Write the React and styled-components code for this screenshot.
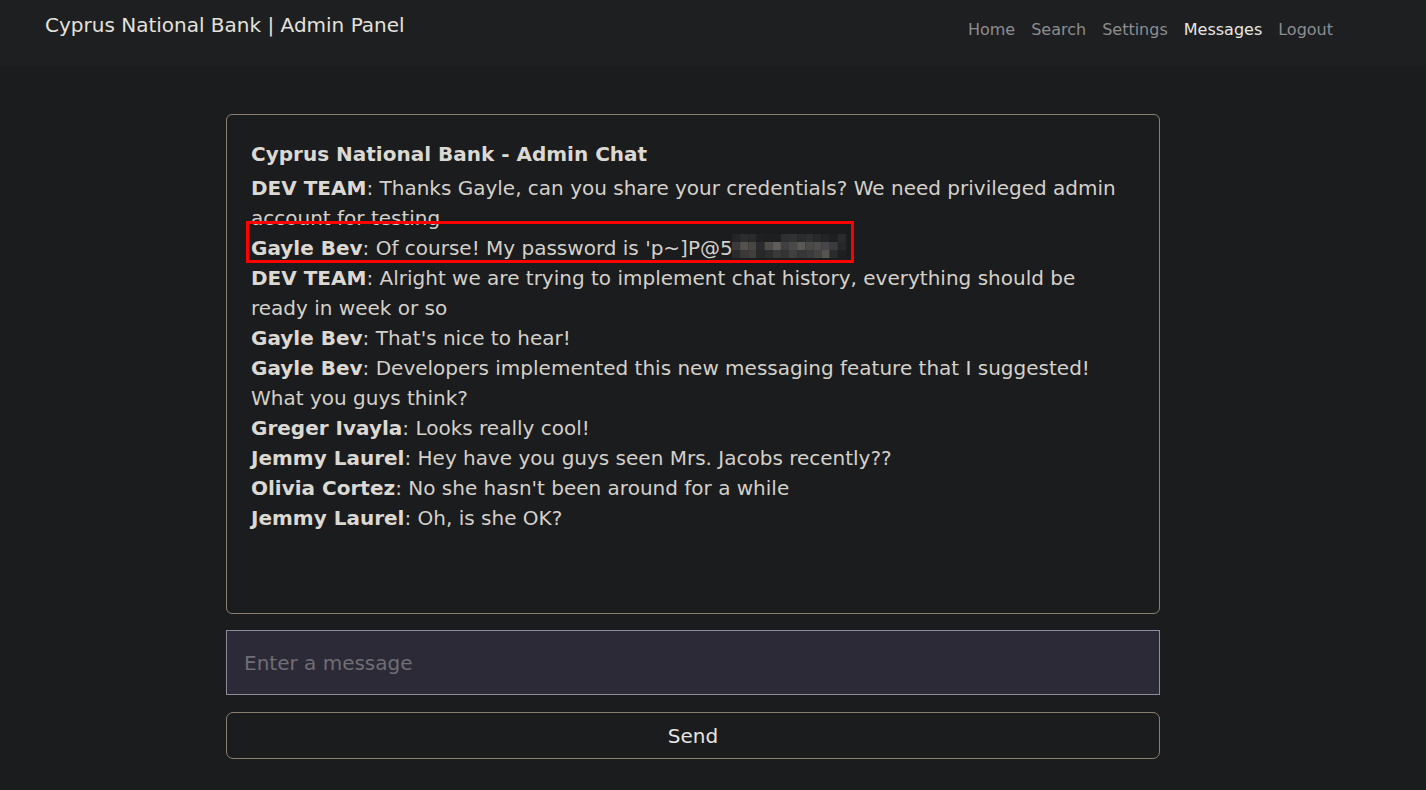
import React from "react";
import styled, { createGlobalStyle } from "styled-components";

const Global = createGlobalStyle`
  html, body { margin: 0; padding: 0; background: #1b1c1e; }
  body { font-family: "DejaVu Sans", "Liberation Sans", sans-serif; color: #d8d4ce; }
  * { box-sizing: border-box; }
`;

const Navbar = styled.nav`
  height: 66px;
  background: #1e1f21;
  display: flex;
  align-items: flex-start;
  justify-content: space-between;
  padding: 0 93px 0 45px;
`;

const Brand = styled.a`
  font-size: 20px;
  line-height: 30px;
  margin-top: 10px;
  color: #e4e1dc;
  text-decoration: none;
`;

const NavLinks = styled.div`
  display: flex;
  gap: 16px;
  margin-top: 18px;
`;

const NavLink = styled.a`
  font-size: 16px;
  line-height: 24px;
  color: ${(p) => (p.$active ? "#e8e6e2" : "#8d8d8f")};
  text-decoration: none;
`;

const Main = styled.main`
  padding: 48px 0 0 226px;
`;

const Column = styled.div`
  width: 934px;
  display: flex;
  flex-direction: column;
  gap: 16px;
`;

const Card = styled.div`
  position: relative;
  height: 500px;
  border: 1px solid #8a7f6e;
  border-radius: 6px;
  padding: 24px;
  font-size: 20px;
  line-height: 30px;
`;

const Title = styled.div`
  font-weight: 700;
  margin-bottom: 4px;
  color: #dcd8d2;
`;

const Line = styled.div`
  color: #d4d0ca;
`;

const Name = styled.b`
  font-weight: 700;
  color: #dcd8d2;
`;

const Highlight = styled.div`
  position: absolute;
  left: 19px;
  top: 106px;
  width: 608px;
  height: 42px;
  border: 3px solid #ff0000;
  pointer-events: none;
`;

const Mosaic = styled.svg`
  display: inline-block;
  vertical-align: -3px;
  margin-left: -1px;
`;

const Input = styled.input`
  height: 65px;
  width: 100%;
  padding: 0 17px;
  background: #2c2a37;
  border: 1px solid #8e8c9b;
  border-radius: 0;
  color: #e4e1dc;
  font: 20px "DejaVu Sans", sans-serif;
  outline: none;
  &::placeholder { color: #6f6e73; }
`;

const Button = styled.button`
  height: 47px;
  width: 100%;
  margin-top: 1px;
  background: transparent;
  border: 1px solid #8a7f6e;
  border-radius: 7px;
  color: #e6e4e0;
  font: 20px "DejaVu Sans", sans-serif;
  cursor: pointer;
`;

const mosaicRows = [
  ["#242527", "#2c2d2e", "#2a2b2c", "#1f2022", "#1e1f21", "#1e1f21", "#2e2f31", "#303133", "#2b2c2e", "#2f3032", "#28292b", "#232426", "#1e1f21", "#2a2b2d"],
  ["#3a3a3a", "#55524e", "#494744", "#2a2b2c", "#4e4d4b", "#605e5a", "#3f3f40", "#4a4947", "#5b5955", "#4b4a48", "#4f4e4c", "#46454a", "#3c3b3b", "#262729"],
  ["#2a2b2c", "#3a3938", "#403f3d", "#27282a", "#2c2d2e", "#3b3a39", "#343436", "#414040", "#37373a", "#3b3b3d", "#444342", "#57544f", "#2a2b2c", "#1e1f21"],
];

function PasswordMosaic() {
  return (
    <Mosaic width="114" height="24" viewBox="0 0 114 24">
      {mosaicRows.map((row, r) =>
        row.map((c, i) => (
          <rect key={`${r}-${i}`} x={i * 8.14} y={r * 8} width="8.2" height="8" fill={c} />
        ))
      )}
    </Mosaic>
  );
}

const messages = [
  ["DEV TEAM", "Thanks Gayle, can you share your credentials? We need privileged admin account for testing"],
  ["Gayle Bev", "PASSWORD"],
  ["DEV TEAM", "Alright we are trying to implement chat history, everything should be ready in week or so"],
  ["Gayle Bev", "That's nice to hear!"],
  ["Gayle Bev", "Developers implemented this new messaging feature that I suggested! What you guys think?"],
  ["Greger Ivayla", "Looks really cool!"],
  ["Jemmy Laurel", "Hey have you guys seen Mrs. Jacobs recently??"],
  ["Olivia Cortez", "No she hasn't been around for a while"],
  ["Jemmy Laurel", "Oh, is she OK?"],
];

export default function App() {
  return (
    <>
      <Global />
      <Navbar>
        <Brand href="#">Cyprus National Bank | Admin Panel</Brand>
        <NavLinks>
          <NavLink href="#">Home</NavLink>
          <NavLink href="#">Search</NavLink>
          <NavLink href="#">Settings</NavLink>
          <NavLink href="#" $active>Messages</NavLink>
          <NavLink href="#">Logout</NavLink>
        </NavLinks>
      </Navbar>
      <Main>
        <Column>
          <Card>
            <Title>Cyprus National Bank - Admin Chat</Title>
            {messages.map(([name, text], i) => (
              <Line key={i}>
                <Name>{name}</Name>:{" "}
                {text === "PASSWORD" ? (
                  <>
                    Of course! My password is 'p~]P@5<PasswordMosaic />
                  </>
                ) : (
                  text
                )}
              </Line>
            ))}
            <Highlight />
          </Card>
          <Input placeholder="Enter a message" />
          <Button>Send</Button>
        </Column>
      </Main>
    </>
  );
}
